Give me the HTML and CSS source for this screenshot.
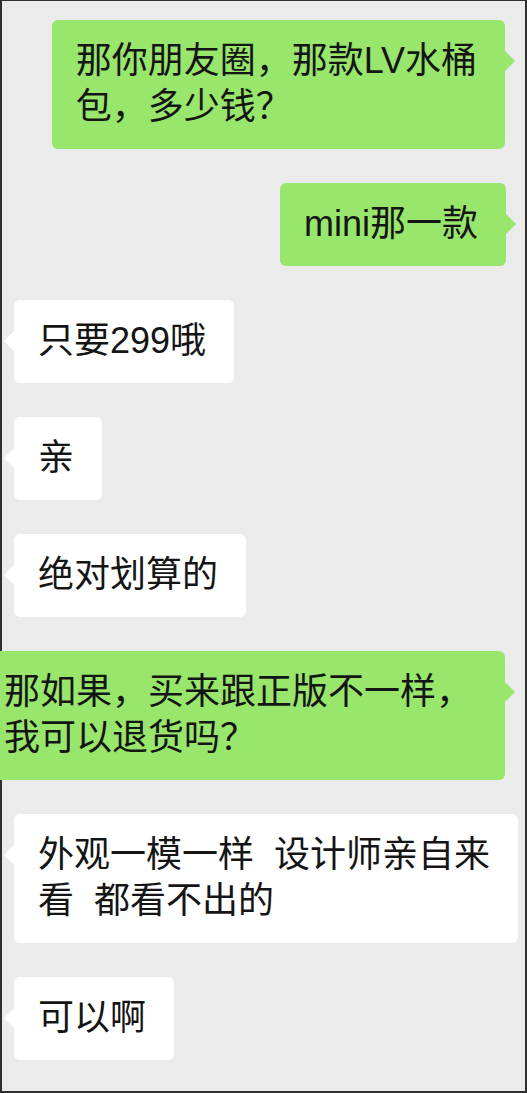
FILE: index.html
```html
<!DOCTYPE html>
<html lang="zh-CN">
<head>
  <meta charset="UTF-8" />
  <meta name="viewport" content="width=device-width, initial-scale=1.0"/>
  <title>聊天记录</title>
  <link rel="stylesheet" href="styles.css">
</head>
<body>

<main class="chat">
  <div class="row me">
    <div class="bubble">那你朋友圈，那款LV水桶<br>包，多少钱？</div>
  </div>
  <div class="row me">
    <div class="bubble tight">mini那一款</div>
  </div>
  <div class="row other">
    <div class="bubble">只要299哦</div>
  </div>
  <div class="row other">
    <div class="bubble">亲</div>
  </div>
  <div class="row other">
    <div class="bubble">绝对划算的</div>
  </div>
  <div class="row me">
    <div class="bubble wide">那如果，买来跟正版不一样，<br>我可以退货吗？</div>
  </div>
  <div class="row other">
    <div class="bubble">外观一模一样&nbsp;&nbsp;设计师亲自来<br>看&nbsp;&nbsp;都看不出的</div>
  </div>
  <div class="row other">
    <div class="bubble">可以啊</div>
  </div>
</main>

</body>
</html>
```

FILE: styles.css
```css
html, body {
  margin: 0; height: 100%;
}
body {
  font-family: "Liberation Sans", "Noto Sans CJK SC", sans-serif;
  background: #ebebeb;
  color: #151515;
}
.chat {
  box-sizing: border-box;
  height: 1093px;
  background: #ebebeb;
  border: 2px solid #2f2f2f; border-top-width: 1px;
  padding: 19px 0 0;
  display: flex; flex-direction: column; gap: 34px;
}
.row {
  display: flex;
}
.row.me { justify-content: flex-end; padding-right: 20px; }
.row.other { justify-content: flex-start; padding-left: 12px; }

.bubble {
  position: relative;
  flex-shrink: 0;
  white-space: nowrap;
  font-size: 36px; line-height: 46px;
  padding: 18px 28px 19px 24px;
  border-radius: 6px;
  background: #fff;
}
.row.me .bubble { background: #98e66b; }
.row.me .bubble.tight { margin-right: -1px; }
.row.me .bubble.wide { padding-right: 33px; }

/* little tail pointing at the avatar side */
.bubble::after {
  content: "";
  position: absolute;
  top: 31px;
  border-top: 10px solid transparent;
  border-bottom: 10px solid transparent;
}
.row.me .bubble::after {
  right: -10px;
  border-left: 10px solid #98e66b;
}
.row.other .bubble::after {
  left: -10px;
  border-right: 10px solid #fff;
}
```
